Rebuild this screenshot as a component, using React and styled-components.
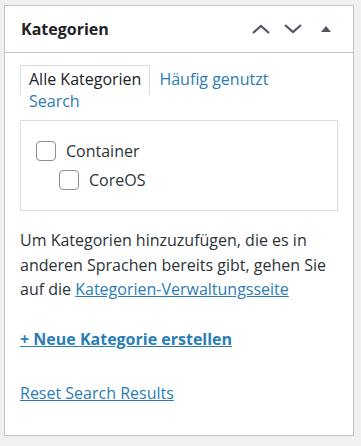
import React from "react";
import styled, { createGlobalStyle } from "styled-components";

const GlobalStyle = createGlobalStyle`
  html, body {
    margin: 0;
    padding: 0;
    background: #f0f0f1;
  }
  body {
    font-family: "Open Sans", "Noto Sans", sans-serif;
    color: #2c3338;
  }
`;

const Page = styled.div`
  padding: 5px 0 10px 4px;
`;

const Panel = styled.div`
  width: 348px;
  background: #fff;
  border: 1px solid #c3c4c7;
  box-sizing: content-box;
`;

const Header = styled.div`
  display: flex;
  align-items: center;
  height: 46px;
  padding: 0 16px;
  border-bottom: 1px solid #c3c4c7;
`;

const Title = styled.h2`
  flex: 1;
  margin: 0;
  font-size: 16px;
  font-weight: 700;
  color: #1d2327;
`;

const HeaderButtons = styled.div`
  display: flex;
  align-items: center;
  gap: 12px;
`;

const IconButton = styled.button`
  display: flex;
  align-items: center;
  justify-content: center;
  width: ${(p) => p.$w || 20}px;
  height: 20px;
  padding: 0;
  border: 0;
  background: none;
  color: #50575e;
`;

const Body = styled.div`
  padding: 12px 15px 30px;
`;

const Tabs = styled.ul`
  display: flex;
  flex-wrap: wrap;
  align-items: flex-start;
  margin: 0;
  padding: 0;
  list-style: none;
`;

const Tab = styled.li`
  padding: 5px 8px 0;
  font-size: 16px;
  line-height: 16px;
  border: 1px solid ${(p) => (p.$active ? "#dcdcde" : "transparent")};
  border-bottom: 0;
  height: ${(p) => (p.$active ? "24px" : "16px")};
  margin-bottom: ${(p) => (p.$active ? "-8px" : "0")};
  color: ${(p) => (p.$active ? "#1d2327" : "#2a7db5")};
  background: ${(p) => (p.$active ? "#fff" : "transparent")};
  white-space: nowrap;
`;

const TabLine = styled.li`
  flex-basis: 100%;
  height: 0;
`;

const CategoryBox = styled.div`
  margin-top: 11px;
  border: 1px solid #dcdcde;
  padding: 20px 15px 20px;
`;

const CatList = styled.ul`
  display: flex;
  flex-direction: column;
  gap: 9px;
  margin: 0;
  padding: 0;
  list-style: none;
`;

const CatItem = styled.li`
  display: flex;
  align-items: center;
  gap: 10px;
  height: 20px;
  padding-left: ${(p) => p.$level * 23}px;
  font-size: 16px;
  line-height: 20px;
  color: #2c3338;
`;

const Box = styled.span`
  width: 18px;
  height: 18px;
  border: 1px solid #8c8f94;
  border-radius: 4px;
  background: #fff;
`;

const Info = styled.p`
  margin: 17px 0 0;
  font-size: 16px;
  line-height: 24.5px;
  color: #2c3338;
`;

const Link = styled.a`
  color: #2a7db5;
  text-decoration: underline;
  font-weight: ${(p) => (p.$bold ? 700 : 400)};
`;

const Action = styled.p`
  margin: ${(p) => p.$gap}px 0 0;
  font-size: 16px;
  line-height: 24px;
`;

const categories = [
  { name: "Container", level: 0 },
  { name: "CoreOS", level: 1 },
];

const App = () => {
  return (
    <Page>
      <GlobalStyle />
      <Panel>
        <Header>
          <Title>Kategorien</Title>
          <HeaderButtons>
            <IconButton $w={20}>
              <svg width="20" height="12" viewBox="0 0 20 12">
                <path d="M2 10 L10 3 L18 10" fill="none" stroke="currentColor" strokeWidth="2.2" />
              </svg>
            </IconButton>
            <IconButton $w={20}>
              <svg width="20" height="12" viewBox="0 0 20 12">
                <path d="M2 2 L10 9 L18 2" fill="none" stroke="currentColor" strokeWidth="2.2" />
              </svg>
            </IconButton>
            <IconButton $w={22}>
              <svg width="12" height="8" viewBox="0 0 12 8">
                <path d="M1 7 L6 1 L11 7 Z" fill="currentColor" />
              </svg>
            </IconButton>
          </HeaderButtons>
        </Header>
        <Body>
          <Tabs>
            <Tab $active>Alle Kategorien</Tab>
            <Tab>Häufig genutzt</Tab>
            <TabLine />
            <Tab>Search</Tab>
          </Tabs>
          <CategoryBox>
            <CatList>
              {categories.map((c, i) => (
                <CatItem key={i} $level={c.level}>
                  <Box />
                  {c.name}
                </CatItem>
              ))}
            </CatList>
          </CategoryBox>
          <Info>
            Um Kategorien hinzuzufügen, die es in anderen Sprachen bereits gibt, gehen Sie auf die{" "}
            <Link href="#">Kategorien-Verwaltungsseite</Link>
          </Info>
          <Action $gap={25}>
            <Link href="#" $bold>+ Neue Kategorie erstellen</Link>
          </Action>
          <Action $gap={30}>
            <Link href="#">Reset Search Results</Link>
          </Action>
        </Body>
      </Panel>
    </Page>
  );
};

export default App;
